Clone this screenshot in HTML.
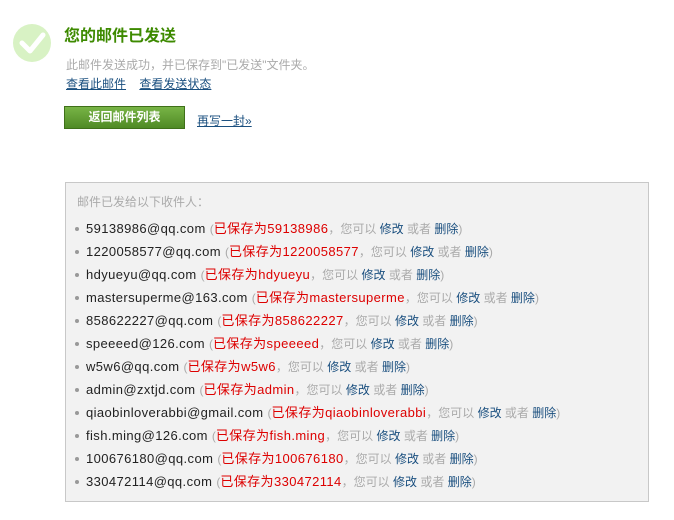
<!DOCTYPE html>
<html><head><meta charset="utf-8"><style>
body{margin:0;width:674px;height:520px;background:#fff;font-family:"Liberation Sans","Noto Sans CJK SC",sans-serif;position:relative;overflow:hidden}
.abs{position:absolute}
a{color:#1a4f7f}
.box{left:65px;top:182px;width:584px;height:320px;background:#f2f2f2;border:1px solid #c8c8c8;box-sizing:border-box}
.row{position:absolute;left:75px;font-size:13px;color:#222;white-space:nowrap;line-height:16px;letter-spacing:0.4px}
.row:before{content:"";display:inline-block;width:4px;height:4px;border-radius:2px;background:#999;margin-right:7px;vertical-align:middle;position:relative;top:-1px}
.g{color:#aaa;font-size:12px;letter-spacing:0}.r{color:#d00;font-size:13px;letter-spacing:0.4px}.b{color:#1a4f7f;font-size:12px}
</style></head><body>
<svg class="abs" style="left:13px;top:24px" width="38" height="38"><circle cx="19" cy="19" r="19" fill="#d8f2c4"/><path d="M9 19 L17 27 L30 11" stroke="#fff" stroke-width="5" fill="none" stroke-linecap="round" stroke-linejoin="round"/></svg>
<div class="abs" style="left:64px;top:27px;font-size:16px;font-weight:bold;color:#3d8a00;line-height:20px">您的邮件已发送</div>
<div class="abs" style="left:66px;top:56px;font-size:12px;color:#aaa">此邮件发送成功，并已保存到"已发送"文件夹。</div>
<div class="abs" style="left:66px;top:75px;font-size:12px"><a style="color:#1a4f7f;text-decoration:underline">查看此邮件</a>&nbsp;&nbsp;&nbsp;&nbsp;<a style="text-decoration:underline">查看发送状态</a></div>
<div class="abs" style="left:64px;top:106px;width:121px;height:23px;background:linear-gradient(#78b446,#4f8a25);border:1px solid #3f7019;box-sizing:border-box;color:#fff;font-size:12px;font-weight:bold;text-align:center;line-height:21px">返回邮件列表</div>
<div class="abs" style="left:197px;top:112px;font-size:12px;color:#1a4f7f;text-decoration:underline">再写一封»</div>
<div class="abs box"></div>
<div class="abs" style="left:77px;top:193px;font-size:12px;color:#aaa">邮件已发给以下收件人：</div>
<div class="row" style="top:221px">59138986@qq.com <span class="g">(</span><span class="r">已保存为59138986</span><span class="g">，您可以 <span class="b">修改</span> 或者 <span class="b">删除</span>)</span></div>
<div class="row" style="top:244px">1220058577@qq.com <span class="g">(</span><span class="r">已保存为1220058577</span><span class="g">，您可以 <span class="b">修改</span> 或者 <span class="b">删除</span>)</span></div>
<div class="row" style="top:267px">hdyueyu@qq.com <span class="g">(</span><span class="r">已保存为hdyueyu</span><span class="g">，您可以 <span class="b">修改</span> 或者 <span class="b">删除</span>)</span></div>
<div class="row" style="top:290px">mastersuperme@163.com <span class="g">(</span><span class="r">已保存为mastersuperme</span><span class="g">，您可以 <span class="b">修改</span> 或者 <span class="b">删除</span>)</span></div>
<div class="row" style="top:313px">858622227@qq.com <span class="g">(</span><span class="r">已保存为858622227</span><span class="g">，您可以 <span class="b">修改</span> 或者 <span class="b">删除</span>)</span></div>
<div class="row" style="top:336px">speeeed@126.com <span class="g">(</span><span class="r">已保存为speeeed</span><span class="g">，您可以 <span class="b">修改</span> 或者 <span class="b">删除</span>)</span></div>
<div class="row" style="top:359px">w5w6@qq.com <span class="g">(</span><span class="r">已保存为w5w6</span><span class="g">，您可以 <span class="b">修改</span> 或者 <span class="b">删除</span>)</span></div>
<div class="row" style="top:382px">admin@zxtjd.com <span class="g">(</span><span class="r">已保存为admin</span><span class="g">，您可以 <span class="b">修改</span> 或者 <span class="b">删除</span>)</span></div>
<div class="row" style="top:405px">qiaobinloverabbi@gmail.com <span class="g">(</span><span class="r">已保存为qiaobinloverabbi</span><span class="g">，您可以 <span class="b">修改</span> 或者 <span class="b">删除</span>)</span></div>
<div class="row" style="top:428px">fish.ming@126.com <span class="g">(</span><span class="r">已保存为fish.ming</span><span class="g">，您可以 <span class="b">修改</span> 或者 <span class="b">删除</span>)</span></div>
<div class="row" style="top:451px">100676180@qq.com <span class="g">(</span><span class="r">已保存为100676180</span><span class="g">，您可以 <span class="b">修改</span> 或者 <span class="b">删除</span>)</span></div>
<div class="row" style="top:474px">330472114@qq.com <span class="g">(</span><span class="r">已保存为330472114</span><span class="g">，您可以 <span class="b">修改</span> 或者 <span class="b">删除</span>)</span></div>
</body></html>
